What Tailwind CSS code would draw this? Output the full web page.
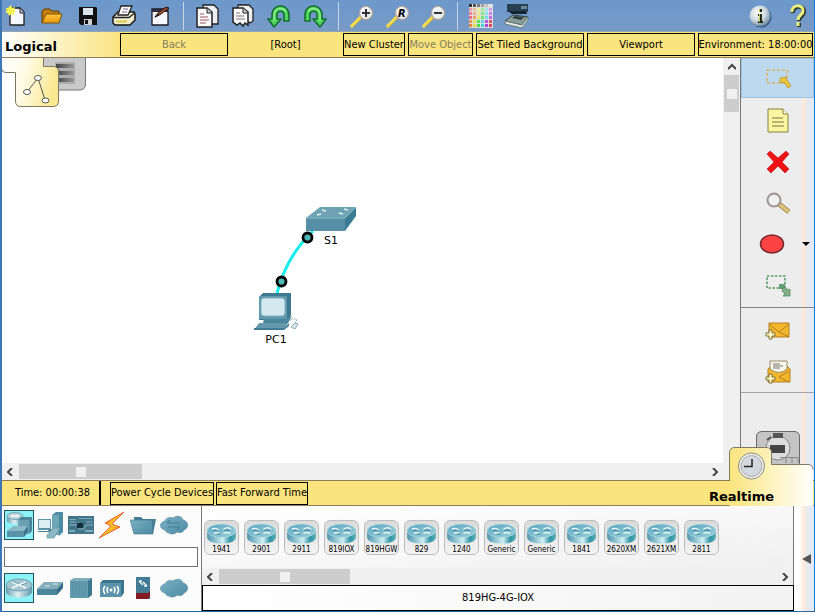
<!DOCTYPE html>
<html lang="en">
<head>
<meta charset="utf-8">
<meta name="viewport" content="width=device-width, initial-scale=1">
<title>Network Simulator - Logical Workspace</title>
<script src="https://cdn.jsdelivr.net/npm/@tailwindcss/browser@4"></script>
</head>
<body class="h-screen min-h-[560px] flex flex-col overflow-hidden bg-white border-l-2 border-l-[#3d76b4] border-r border-r-[#1c78d2] border-b border-b-[#2867a3] font-['DejaVu_Sans_Condensed','DejaVu_Sans',sans-serif] text-[11px] leading-4 text-black">

<!-- shared gradients and symbols -->
<svg class="absolute w-0 h-0" aria-hidden="true">
  <defs>
    <linearGradient id="teal" x1="0" x2="1" y1="0" y2="0"><stop offset="0" stop-color="#4f93ab"/><stop offset=".3" stop-color="#8fc6d3"/><stop offset=".55" stop-color="#d3f0f2"/><stop offset=".8" stop-color="#2f93a3"/><stop offset="1" stop-color="#5cb2b8"/></linearGradient>
    <linearGradient id="tealTop" x1="0" x2="1" y1="0" y2="1"><stop offset="0" stop-color="#5aa9c1"/><stop offset="1" stop-color="#9ccfdb"/></linearGradient>
    <linearGradient id="steel" x1="0" x2="1" y1="0" y2="1"><stop offset="0" stop-color="#7db0c4"/><stop offset="1" stop-color="#4a8aa3"/></linearGradient>
    <linearGradient id="metal" x1="0" x2="1"><stop offset="0" stop-color="#6a9fb2"/><stop offset=".45" stop-color="#e3f0f3"/><stop offset="1" stop-color="#5c97ab"/></linearGradient>
    <linearGradient id="gold" x1="0" x2="0" y1="0" y2="1"><stop offset="0" stop-color="#ffc93c"/><stop offset="1" stop-color="#e9960b"/></linearGradient>
    <linearGradient id="bolt" x1="0" x2="1" y1="0" y2="1"><stop offset="0" stop-color="#e8321c"/><stop offset=".5" stop-color="#ffc928"/><stop offset="1" stop-color="#f0561c"/></linearGradient>
    <radialGradient id="glass" cx=".4" cy=".35" r=".7"><stop offset="0" stop-color="#ffffff"/><stop offset=".55" stop-color="#c9d6dc"/><stop offset="1" stop-color="#5e7d9c"/></radialGradient>
    <symbol id="router" viewBox="0 0 32 23">
      <path d="M1 8v7c0 9 30 9 30 0V8z" fill="url(#teal)"/>
      <ellipse cx="16" cy="8" rx="15" ry="7" fill="url(#tealTop)" stroke="#b9dde5" stroke-width=".6"/>
      <path d="M6 6.500q4-2 7 1M26 6.500q-3-3-8 0M8 11q3-2 7 0M25 11q-4-2-7 0" stroke="#f2fbfc" stroke-width="1.400" fill="none"/>
      <path d="M7 8q4-2 6 1M19 8q3-2 6 0M12 12l3-1" stroke="#2c7088" stroke-width=".9" fill="none"/>
    </symbol>
    <symbol id="lens" viewBox="0 0 26 24">
      <path d="M3 22L12 13" stroke="#f0dc50" stroke-width="3.500" stroke-linecap="round"/>
      <path d="M4 23L13 14" stroke="#c4a634" stroke-width="1"/>
      <circle cx="17" cy="9" r="6.500" fill="#eef1f3" stroke="#b4a49a" stroke-width="1.300"/>
      <path d="M12 7a6 6 0 0 1 7-3" stroke="#fff" stroke-width="1.500" fill="none"/>
    </symbol>
    <symbol id="uturn" viewBox="0 0 24 24">
      <path d="M22 17h-5V11c0-5-7-5-7 0v4h4l-7 8-6-8h4v-4C5 -1 22 -1 22 11z" fill="#4fd35e" stroke="#156f31" stroke-width="1.600" stroke-linejoin="round"/>
      <path d="M7 17v-6c0-7 9-9 12-3" stroke="#92ee93" stroke-width="1.500" fill="none"/>
    </symbol>
    <symbol id="cloud" viewBox="0 0 28 20">
      <path d="M5 15c-6-1-6-8 0-9 1-4 6-4 8-3 4-3 9-2 10 2 6 1 6 8 1 10-1 3-5 3-7 2-3 3-7 2-8 1-2 0-3-1-4-3z" fill="url(#steel)" stroke="#5b94a8" stroke-width=".7"/>
    </symbol>
  </defs>
</svg>

<!-- main toolbar -->
<header class="h-8 shrink-0 flex items-center bg-linear-to-b from-[#6c98cb] to-[#789ac6] border-b border-[#91a5b5]">
  <nav class="flex items-center -ml-1" aria-label="Main toolbar">
    <button class="w-9 h-7 grid place-items-center" aria-label="New"><svg width="20" height="22" viewBox="0 0 20 22"><path d="M4 3h10l4 4v13H4z" fill="#f6f7ff" stroke="#222" stroke-width="1.300"/><path d="M14 3v5h4" fill="#bfc4d6" stroke="#222"/><path d="M5 0l1 3 3-1-1 3 3 1-3 1 0 3-3-1-2 2-1-3-3 0 2-3-2-2 3 0z" fill="#f3f44d"/></svg></button>
    <button class="w-9 h-7 grid place-items-center" aria-label="Open"><svg width="22" height="18" viewBox="0 0 22 18"><path d="M1 16V4l2-2h6l2 2h7v4" fill="#c37c10" stroke="#5c3b08"/><path d="M1 16L5 7h16l-3 9z" fill="url(#gold)" stroke="#80530a"/></svg></button>
    <button class="w-9 h-7 grid place-items-center" aria-label="Save"><svg width="20" height="20" viewBox="0 0 20 20"><path d="M1 1h17l1 1v17H3l-2-2z" fill="#111"/><path d="M5 2h10v7H5z" fill="#dbe3ea"/><path d="M6 13h8v6H6z" fill="#c9ced4"/><path d="M7 14h3v4H7z" fill="#111"/></svg></button>
    <button class="w-9 h-7 grid place-items-center" aria-label="Print"><svg width="24" height="22" viewBox="0 0 24 22"><path d="M1 12L6 7h16l1 2v6l-5 5H3l-2-2z" fill="#f1efcf" stroke="#161616" stroke-width="1.500"/><path d="M6 10L9 1h11l-4 9z" fill="#fff" stroke="#222" stroke-width="1.300"/><path d="M11 4h5M10 7h5" stroke="#735d91"/><path d="M2 12.500h15l5-4" fill="none" stroke="#222" stroke-width="1.300"/><path d="M4 16.500h11" stroke="#e0c648" stroke-width="2"/></svg></button>
    <button class="w-9 h-7 grid place-items-center" aria-label="Activity wizard"><svg width="20" height="20" viewBox="0 0 20 20"><path d="M2 3h16v16H2z" fill="#f7f8ff" stroke="#1b1b26" stroke-width="1.300"/><path d="M2 3h16v3H2z" fill="#29293b"/><path d="M5 11l3-4L16 1l3 1-8 6z" fill="#9e5137" stroke="#2e1512"/><path d="M4 12l4-4 2 1z" fill="#241a1a"/></svg></button>
    <span class="w-px h-7 mx-[5px] bg-[#c7d5e7]"></span>
    <button class="w-9 h-7 grid place-items-center" aria-label="Copy"><svg width="24" height="26" viewBox="0 0 24 26"><path d="M8 2h11l4 4v15H8z" fill="#eceef2" stroke="#222" stroke-width="1.300"/><path d="M2 5h10l5 4v15H2z" fill="#fafafa" stroke="#222" stroke-width="1.500"/><path d="M12 5v5h5" fill="#ccc" stroke="#222"/><path d="M5 11h4M5 14h8M5 17h9M5 20h6" stroke="#9b5966"/></svg></button>
    <button class="w-9 h-7 grid place-items-center" aria-label="Paste"><svg width="24" height="26" viewBox="0 0 24 26"><path d="M7 2h11l4 4v12l-3 2-3-2-9 1z" fill="#eceef2" stroke="#222" stroke-width="1.300"/><path d="M2 5h10l5 4v13l-3-2-2 3-3-3-3 2-4-3z" fill="#fafafa" stroke="#222" stroke-width="1.500"/><path d="M12 5v5h5" fill="#ccc" stroke="#222"/><path d="M5 10h4M5 13h8M5 16h9" stroke="#887079"/></svg></button>
    <button class="w-9 h-7 grid place-items-center" aria-label="Undo"><svg width="24" height="24"><use href="#uturn"/></svg></button>
    <button class="w-9 h-7 grid place-items-center" aria-label="Redo"><svg class="-scale-x-100" width="24" height="24"><use href="#uturn"/></svg></button>
    <span class="w-px h-7 mx-[5px] bg-[#c7d5e7]"></span>
    <button class="w-9 h-7 grid place-items-center" aria-label="Zoom in"><svg width="26" height="24"><use href="#lens"/><path d="M17 5v8M13 9h8" stroke="#333" stroke-width="2"/></svg></button>
    <button class="w-9 h-7 grid place-items-center" aria-label="Zoom reset"><svg width="26" height="24"><use href="#lens"/><text x="13" y="13" class="font-['DejaVu_Sans_Condensed'] font-bold italic text-[11px]">R</text></svg></button>
    <button class="w-9 h-7 grid place-items-center" aria-label="Zoom out"><svg width="26" height="24"><use href="#lens"/><path d="M13 9h8" stroke="#333" stroke-width="2"/></svg></button>
    <span class="w-px h-7 mx-[5px] bg-[#c7d5e7]"></span>
    <button class="w-9 h-7 grid place-items-center" aria-label="Drawing palette"><svg id="palette" width="24" height="24" viewBox="0 0 24 24"><path d="M0 0h24v24H0z" fill="#ddd"/></svg></button>
    <button class="w-9 h-7 grid place-items-center" aria-label="Custom devices"><svg width="26" height="26" viewBox="0 0 26 26"><path d="M3 1h21v8H3z" fill="#284052"/><path d="M17 3h6v3h-6z" fill="#6b899a"/><path d="M4 8h18l1 3H8z" fill="#142531"/><path d="M1 18l8-6 15 2-6 8z" fill="#8a9d98" stroke="#344"/><path d="M8 15l3-2 9 1-3 3z" fill="#30413f"/><path d="M1 18v3l17 4 6-8v-3l-6 8z" fill="#e4ebe5" stroke="#677"/></svg></button>
  </nav>
  <div class="ml-auto flex items-center">
    <button class="w-9 h-7 grid place-items-center" aria-label="Info"><svg width="24" height="24" viewBox="0 0 24 24"><circle cx="13" cy="13" r="10.500" fill="#345681"/><circle cx="12" cy="12" r="10.500" fill="url(#glass)"/><path d="M11 5h3v3h-3zM10 10h4v7h1v2h-5v-2h1v-5h-1z" fill="#242a13"/><path d="M11 5h1v3h-1zM11 10h1v8h-1z" fill="#c8ca58"/></svg></button>
    <button class="w-9 h-7 grid place-items-center pl-1" aria-label="Help"><svg width="20" height="24" viewBox="0 0 20 24"><path d="M5 9c-1-8 12-8 11-1 0 4-5 4-5 9M11 19v4" fill="none" stroke="#2e3a36" stroke-width="4"/><path d="M4 8c-1-8 12-8 11-1 0 4-5 4-5 9M10 18v4" fill="none" stroke="#eaf07c" stroke-width="3"/></svg></button>
  </div>
</header>

<!-- workspace bar -->
<div class="h-[26px] shrink-0 flex items-center pr-px bg-linear-to-r from-white to-[#f9e47e] to-[118px] border-b border-[#8d7d5c] whitespace-nowrap">
  <h1 class="w-[118px] shrink-0 pl-[3px] pt-1 font-['DejaVu_Sans'] font-bold text-[13px]">Logical</h1>
  <button class="w-[108px] h-[23px] shrink-0 border border-black text-[#86805f]" disabled>Back</button>
  <span class="flex-1 text-center">[Root]</span>
  <div class="flex gap-[3px]">
    <button class="w-[62px] h-[23px] flex items-center justify-center border border-black">New Cluster</button>
    <button class="w-[65px] h-[23px] flex items-center justify-center border border-black text-[#86805f]" disabled>Move Object</button>
    <button class="w-[108px] h-[23px] flex items-center justify-center border border-black">Set Tiled Background</button>
    <button class="w-[108px] h-[23px] flex items-center justify-center border border-black">Viewport</button>
    <button class="w-[115px] h-[23px] flex items-center justify-center border border-black">Environment: 18:00:00</button>
  </div>
</div>

<main class="relative flex-1 min-h-0 flex">
  <section class="flex-1 min-w-0 flex flex-col" aria-label="Workspace">
    <div class="relative flex-1 min-h-0 overflow-hidden bg-white">
      <!-- workspace tabs -->
      <svg class="absolute left-0 -top-px" width="90" height="52" viewBox="2 57 90 52">
        <defs><linearGradient id="tabL" x1="0" x2="1" y1="0" y2=".2"><stop offset="0" stop-color="#fff"/><stop offset=".45" stop-color="#fffbe6"/><stop offset="1" stop-color="#fae993"/></linearGradient>
        <linearGradient id="rack" x1="0" x2="1"><stop offset="0" stop-color="#444"/><stop offset="1" stop-color="#999"/></linearGradient></defs>
        <path d="M43 57.500h42.500V84q0 6-6 6H43z" fill="#c9c9c9" stroke="#777"/>
        <path d="M55 62h20v22H55z" fill="#adadad"/>
        <path d="M56 64h18v4H56zM56 71h18v4H56zM56 78h18v4H56z" fill="url(#rack)"/>
        <path d="M2 57h41v9.500h10q5.500 0 5.500 5.500V101q0 5.500-5.500 5.500H21q-5.500 0-5.500-5.500V72.500H6q-4 0-4-3z" fill="url(#tabL)"/>
        <path d="M43.500 58v8.500H53q5.500 0 5.500 5.500V101q0 5.500-5.500 5.500H21q-5.500 0-5.500-5.500V72.500H6q-4 0-4-3" fill="none" stroke="#7d7660"/>
        <path d="M27 92L38 78l7 22" fill="none" stroke="#555"/>
        <g fill="#fff" stroke="#555"><ellipse cx="38" cy="78" rx="3.500" ry="2.500"/><ellipse cx="27" cy="92" rx="3.500" ry="2.500"/><ellipse cx="45.500" cy="100.500" rx="3.500" ry="2.500"/></g>
      </svg>
      <!-- topology -->
      <svg class="absolute left-[240px] top-[132px]" width="130" height="160" viewBox="242 190 130 160" role="img" aria-label="Network topology">
        <path d="M277 293C283 270 295 248 313 231" fill="none" stroke="#18ecec" stroke-width="3"/>
        <path d="M306 218l14-11h36l-10 12z" fill="#6fa3b4"/>
        <path d="M306 218h39v13h-39z" fill="#568fa5"/>
        <path d="M345 218l11-11v9l-11 15z" fill="#3c7b94"/>
        <path d="M306 218h39l11-11" fill="none" stroke="#8bbac8"/>
        <path d="M317 215l4-1M322 210l4 1M339 213l4 1M344 209l4 1" stroke="#e3f2f5" stroke-width="1.500"/>
        <path d="M259 297l4-4h28v22l-3 5h-29z" fill="#3c7890"/>
        <path d="M259 296h28v23h-28z" fill="#5f98ad"/>
        <rect x="261" y="298" width="24" height="18" rx="3" fill="#d4e8ef" stroke="#82b0c0"/>
        <path d="M264 319h20l8-3-4 7h-25z" fill="#4a879e"/>
        <path d="M259 323h29l-5 7h-29z" fill="#6598ac"/>
        <path d="M254 328h30l5-5v3l-5 4h-30z" fill="#427c94"/>
        <path d="M289 321q5-4 8-1l-3 4" fill="none" stroke="#a9bcc4"/>
        <path d="M291 327l4-4 3 1-3 5z" fill="#d8e5e9" stroke="#769baa" stroke-width=".8"/>
        <g fill="#4fb9b9" stroke="#000" stroke-width="2.800"><circle cx="307.500" cy="237.500" r="4.500"/><circle cx="281.500" cy="281.500" r="4.500"/></g>
        <g class="font-['DejaVu_Sans'] text-[11px]" text-anchor="middle"><text x="331" y="244">S1</text><text x="276" y="343">PC1</text></g>
      </svg>
    </div>
    <div class="h-[17px] shrink-0 flex bg-[#f0f0f0]">
      <button class="w-[17px] grid place-items-center" aria-label="Scroll left"><svg width="8" height="8"><path d="M5 0L1 4l4 4" fill="none" stroke="#444" stroke-width="2"/></svg></button>
      <div class="w-[123px] my-px grid place-items-center bg-[#cdcdcd]"><span class="size-[10px] bg-[#f0f0f0]"></span></div>
      <button class="w-[17px] ml-auto grid place-items-center" aria-label="Scroll right"><svg width="8" height="8"><path d="M2 0l4 4-4 4" fill="none" stroke="#444" stroke-width="2"/></svg></button>
    </div>
  </section>
  <div class="w-[17px] shrink-0 flex flex-col bg-[#f0f0f0]">
    <button class="h-[17px] grid place-items-center" aria-label="Scroll up"><svg width="8" height="8"><path d="M0 6l4-4 4 4" fill="none" stroke="#444" stroke-width="2"/></svg></button>
    <div class="h-[37px] mx-px grid place-items-center bg-[#cdcdcd]"><span class="size-[10px] bg-[#f0f0f0]"></span></div>
  </div>

  <!-- tool palette -->
  <aside class="w-[74px] shrink-0 flex flex-col border-l border-[#777] bg-linear-to-r from-[#ededed] from-[60px] via-[#fde9d9] via-[63px] to-[#e3eaf3] to-[67px]" aria-label="Tools">
    <button class="h-10 shrink-0 mb-0.5 grid place-items-center border border-[#9fc4e2] bg-[#bcd9ef]" aria-label="Select"><svg width="28" height="24" viewBox="0 0 28 24"><path d="M3 4h20v13H3z" fill="none" stroke="#dbb56c" stroke-width="1.600" stroke-dasharray="3 2"/><path d="M16 12l6-1 1 3 4 6-3 2-4-6-4 1z" fill="#edc638" stroke="#b9a04b"/></svg></button>
    <button class="h-[41px] shrink-0 grid place-items-center" aria-label="Place note"><svg width="22" height="26" viewBox="0 0 22 26"><path d="M1 1h15l5 5v18H1z" fill="#faf5a0" stroke="#82803e"/><path d="M16 1v5h5" fill="#fffde2" stroke="#82803e"/><path d="M5 10h11M5 14h12M5 18h12" stroke="#78753e"/></svg></button>
    <button class="h-[41px] shrink-0 grid place-items-center" aria-label="Delete"><svg width="24" height="24" viewBox="0 0 24 24"><path d="M1 4l3-3 8 7 8-7 3 3-7 8 7 7-4 4-7-7-7 7-4-4 7-7z" fill="#f01114" stroke="#bd0b0e" stroke-width=".6"/></svg></button>
    <button class="h-[41px] shrink-0 grid place-items-center" aria-label="Inspect"><svg width="26" height="24" viewBox="0 0 26 24"><path d="M14 13l10 8" stroke="#a98f55" stroke-width="5"/><path d="M14 13l10 8" stroke="#dfc279" stroke-width="3"/><circle cx="9" cy="9" r="6.500" fill="#edf0f1" stroke="#9d948d" stroke-width="2"/></svg></button>
    <button class="relative h-[41px] shrink-0 grid place-items-center pr-3" aria-label="Draw ellipse"><svg width="26" height="22" viewBox="0 0 26 22"><ellipse cx="13" cy="11" rx="11.500" ry="9" fill="#fb4344" stroke="#78282e" stroke-width="1.500"/></svg><svg class="absolute right-1 top-[19px]" width="8" height="5"><path d="M0 0h8L4 4z"/></svg></button>
    <button class="h-[41px] shrink-0 grid place-items-center" aria-label="Resize shape"><svg width="26" height="24" viewBox="0 0 26 24"><path d="M2 3h18v12H2z" fill="none" stroke="#5b9a68" stroke-width="1.600" stroke-dasharray="2.500 1.500"/><path d="M14 11h6v5h-6z" fill="#5fa070"/><path d="M18 15l2-1 3 3 2-1v7h-7l2-2-3-3z" fill="#84ad8b" stroke="#5b8a65" stroke-width=".8"/></svg></button>
    <hr class="mt-0.5 mb-0.5 border-[#858585]">
    <button class="h-[41px] shrink-0 grid place-items-center" aria-label="Add simple PDU"><svg width="26" height="18" viewBox="0 0 26 18"><path d="M4 1h20v14H4z" fill="#f4b62b" stroke="#b28122"/><path d="M4 2l10 8L24 2M14 10l10 5" fill="none" stroke="#ad7f28"/><path d="M4 8h3v3h3v3H7v3H4v-3H1v-3h3z" fill="#fff8c3" stroke="#7d7136"/></svg></button>
    <button class="h-[41px] shrink-0 grid place-items-center" aria-label="Add complex PDU"><svg width="26" height="26" viewBox="0 0 26 26"><path d="M3 10l4-4h14l4 4v13H3z" fill="#f4b62b" stroke="#b28122"/><path d="M5 2h17v8q-8 7-17 0z" fill="#f8f8ec" stroke="#978b65"/><path d="M8 5h7M8 7h10M8 9h7" stroke="#777"/><path d="M24 12l-10 6 10 5" fill="none" stroke="#ad7f28"/><path d="M4 15h3v3h3v3H7v3H4v-3H1v-3h3z" fill="#fff8c3" stroke="#7d7136"/></svg></button>
    <hr class="border-[#a5a5a5]">
  </aside>

  <!-- simulation mode / realtime tabs -->
  <svg class="absolute right-0 -bottom-[26px] z-10" width="86" height="76" viewBox="728 430 86 76">
    <defs><linearGradient id="tabR" x1="0" x2="1"><stop offset="0" stop-color="#f9e47e"/><stop offset=".5" stop-color="#fdf3bd"/><stop offset="1" stop-color="#fff"/></linearGradient></defs>
    <path d="M756.500 465V437q0-5.500 5.500-5.500h32q5.500 0 5.500 5.500v28z" fill="#c4c4c4" stroke="#686868"/>
    <circle cx="778" cy="448" r="12" fill="#ddd" stroke="#868686"/>
    <path d="M774 434h8v3h-8zM767 440l4-3" fill="#555" stroke="#555" stroke-width="2"/>
    <path d="M770 445h15v8h-15z" fill="#444"/>
    <path d="M780 457.500h18v5M786 458v5M792 458v5" fill="none" stroke="#888"/>
    <path d="M729.500 506V453q0-5.500 5.500-5.500h31q5.500 0 5.500 5.500v11.500H808q5 0 5 5V506z" fill="url(#tabR)"/>
    <path d="M729.500 481V453q0-5.500 5.500-5.500h31q5.500 0 5.500 5.500v11.500H808q5 0 5 5" fill="none" stroke="#807a62"/>
    <circle cx="751.500" cy="466" r="13" fill="#f1f0ea" stroke="#8b8b82"/>
    <circle cx="751.500" cy="466" r="10.500" fill="#d3d7de" stroke="#aaa"/>
    <path d="M752 459v7.500h-8" fill="none" stroke="#222" stroke-width="1.500"/>
  </svg>
</main>

<!-- time bar -->
<div class="relative h-[26px] shrink-0 flex items-center bg-[#f9e47e] border-t border-b border-[#8d7d5c] whitespace-nowrap">
  <div class="w-[99px] h-full flex items-center justify-center border-r-2 border-black pl-1">Time: 00:00:38</div>
  <div class="flex gap-0.5 pl-[9px]">
    <button class="w-[104px] h-[23px] flex items-center justify-center border border-black">Power Cycle Devices</button>
    <button class="w-[92px] h-[23px] flex items-center justify-center border border-black">Fast Forward Time</button>
  </div>
  <h2 class="relative z-20 ml-auto mr-10 pt-2 font-['DejaVu_Sans'] font-bold text-[13px]">Realtime</h2>
</div>

<!-- device browser -->
<footer class="h-[105px] shrink-0 flex bg-[#fbfbfb]">
  <section class="w-[199px] shrink-0 flex flex-col justify-between pt-1 pb-2 pl-0.5 pr-[3px]" aria-label="Device categories">
    <div class="flex gap-px">
      <button class="size-[30px] grid place-items-center border border-[#24505f] bg-[#8df2f6]" aria-label="Network devices"><svg width="28" height="28" viewBox="0 0 28 28"><path d="M2 5v5c0 4 16 4 16 0V5z" fill="url(#metal)"/><ellipse cx="10" cy="5" rx="8" ry="3.500" fill="#b5d0d9" stroke="#5e95a9" stroke-width=".7"/><path d="M6 4l8 2M14 4L6 6" stroke="#fff"/><path d="M13 9l3-3h11v14l-3 3H13z" fill="#4c869c"/><path d="M13 9h11v14H13z" fill="#74a8b9"/><path d="M16 9v8M19 9v12M22 9v12" stroke="#558ea4"/><path d="M2 20l6-5h15l-4 5z" fill="#8bb6c4"/><path d="M2 20h17v6H2z" fill="#5a93a8"/><path d="M19 20l4-5v6l-4 5z" fill="#3d778f"/></svg></button>
      <button class="size-[30px] grid place-items-center" aria-label="End devices"><svg width="28" height="28" viewBox="0 0 28 28"><path d="M16 4l4-3h7v20l-4 4z" fill="#4d8ba3"/><path d="M16 4h7v20h-7z" fill="#6ea5b7"/><path d="M2 8h13v11H2z" fill="#5c95aa"/><path d="M3 9h11v8H3z" fill="#dceef3"/><path d="M1 21h13l2-3h-3l-1 2H3z" fill="#457f96"/><path d="M11 24l7-7h6l-6 10h-7z" fill="#8cb8c6" stroke="#5d94a8" stroke-width=".6"/></svg></button>
      <button class="size-[30px] grid place-items-center" aria-label="Components"><svg width="26" height="20" viewBox="0 0 26 20"><path d="M0 1h26v18H0z" fill="#41758a"/><path d="M1 4h7v1H1zM11 3h13v1H11zM1 15h6v2H1zM17 15h8v2h-8z" fill="#7dabb9"/><path d="M1 10h7l3-3M25 10h-7l-2 4h-6M2 7h6M18 7h6" fill="none" stroke="#8db6c4"/><path d="M9 8h6v5H9z" fill="#142f3c"/></svg></button>
      <button class="size-[30px] grid place-items-center" aria-label="Connections"><svg width="28" height="28" viewBox="0 0 28 28"><path d="M26 1L7 12l6 3L1 27l21-11-8-3z" fill="url(#bolt)" stroke="#df4923" stroke-width=".8"/></svg></button>
      <button class="size-[30px] grid place-items-center" aria-label="Miscellaneous"><svg width="26" height="20" viewBox="0 0 26 20"><path d="M4 2h7l2 2h13l-3 15H5z" fill="#447e95"/><path d="M0 5h22l1 14H4z" fill="url(#steel)" stroke="#41758b" stroke-width=".6"/></svg></button>
      <button class="size-[30px] grid place-items-center" aria-label="Multiuser connection"><svg width="28" height="20"><use href="#cloud"/><path d="M7 8h13M10 5l-3 3M20 12H8M17 15l3-3" fill="none" stroke="#4c879d" stroke-width="1.500"/></svg></button>
    </div>
    <input class="w-full h-5 px-1 border border-[#717171] bg-white" type="text" aria-label="Search devices">
    <div class="flex gap-px">
      <button class="size-[30px] grid place-items-center border border-[#24505f] bg-[#8df2f6]" aria-label="Routers"><svg width="28" height="22" viewBox="0 0 28 22"><path d="M1 8v7c0 7 26 7 26 0V8z" fill="url(#metal)"/><ellipse cx="14" cy="8" rx="13" ry="6" fill="#a3c5d0" stroke="#5e97ab" stroke-width=".8"/><path d="M7 5l14 6M21 5L7 11" stroke="#f3fafb" stroke-width="1.500"/><path d="M8 4.500l6 2.500M22 6l-6 2" stroke="#4b859b" stroke-width=".7"/></svg></button>
      <button class="size-[30px] grid place-items-center" aria-label="Switches"><svg width="28" height="16" viewBox="0 0 28 16"><path d="M1 9l7-7h19l-6 7z" fill="#82adbb"/><path d="M1 9h20v6H1z" fill="#4c869d"/><path d="M21 9l6-7v6l-6 7z" fill="#356e87"/><path d="M9 6h5M17 4h5" stroke="#dceaf0"/></svg></button>
      <button class="size-[30px] grid place-items-center" aria-label="Hubs"><svg width="24" height="22" viewBox="0 0 24 22"><path d="M1 4l4-3h18v17l-4 3H1z" fill="#3d778f"/><path d="M1 4h18v17H1z" fill="#659bae"/><path d="M1 4l4-3h18l-4 3z" fill="#7fadbc"/><path d="M4 5v15M7 5v15M10 5v15M13 5v15M16 5v15" stroke="#528aa0"/></svg></button>
      <button class="size-[30px] grid place-items-center" aria-label="Wireless devices"><svg width="26" height="20" viewBox="0 0 26 20"><path d="M1 5l3-3h21v13l-3 4H1z" fill="#3b758d"/><path d="M1 5h21v14H1z" fill="#5b94aa"/><circle cx="12" cy="12" r="1.500" fill="#fff"/><path d="M9 9q-2 3 0 6M15 9q2 3 0 6M6 8q-3 4 0 8M18 8q3 4 0 8" stroke="#fff" stroke-width="1.500" fill="none"/></svg></button>
      <button class="size-[30px] grid place-items-center" aria-label="Security"><svg width="16" height="24" viewBox="0 0 16 24"><path d="M1 1h14v22H1z" fill="#427c94"/><path d="M1 17h12v6H1zM13 17l2-2v6l-2 2z" fill="#841c25"/><path d="M4 5l4 4M8 6l4 4M4 5h3M12 10H9" stroke="#eaf4f6" stroke-width="1.500"/></svg></button>
      <button class="size-[30px] grid place-items-center" aria-label="WAN emulation"><svg width="28" height="20"><use href="#cloud"/></svg></button>
    </div>
  </section>
  <section class="flex-1 min-w-0 flex flex-col border-l border-[#777]" aria-label="Devices">
    <div id="devices" class="flex-1 flex items-center gap-[5px] pl-0.5 border-r border-[#777] overflow-hidden bg-linear-to-br from-white to-[#f0f0f0]"></div>
    <div class="h-[17px] shrink-0 flex border-r border-[#777] bg-[#f0f0f0]">
      <button class="w-[17px] grid place-items-center" aria-label="Scroll devices left"><svg width="8" height="8"><path d="M5 0L1 4l4 4" fill="none" stroke="#444" stroke-width="2"/></svg></button>
      <div class="w-[131px] my-px grid place-items-center bg-[#cdcdcd]"><span class="size-[10px] bg-[#f0f0f0]"></span></div>
      <button class="w-[17px] ml-auto grid place-items-center" aria-label="Scroll devices right"><svg width="8" height="8"><path d="M2 0l4 4-4 4" fill="none" stroke="#444" stroke-width="2"/></svg></button>
    </div>
    <div class="h-[26px] shrink-0 flex items-center justify-center border border-black bg-linear-to-r from-white to-[#f3f3f3]">819HG-4G-IOX</div>
  </section>
  <button class="w-5 shrink-0 grid place-items-center justify-items-end pr-[3px] bg-linear-to-r from-white from-[5px] via-[#fde9d9] via-[10px] to-[#e3eaf3] to-[14px]" aria-label="Collapse panel"><svg width="9" height="10"><path d="M9 0v10L0 5z" fill="#555"/></svg></button>
</footer>

<template id="device">
  <button class="w-[35px] h-[35px] shrink-0 flex flex-col items-center justify-between border border-[#bdbdbd] rounded-md bg-linear-to-b from-[#dadada] to-[#f4f4f4] pt-0.5 whitespace-nowrap">
    <svg width="31" height="22"><use href="#router"/></svg>
    <span class="font-['DejaVu_Sans_Condensed','DejaVu_Sans'] text-[8px] leading-[9px]"></span>
  </button>
</template>
<script>
const list = document.getElementById('devices');
const tpl = document.getElementById('device');
for (const name of ['1941','2901','2911','819IOX','819HGW','829','1240','Generic','Generic','1841','2620XM','2621XM','2811']) {
  const node = tpl.content.cloneNode(true);
  node.querySelector('span').textContent = name;
  list.append(node);
}
// colour swatches of the palette icon: hue by column, lightness by row
const pal = document.getElementById('palette');
const hues = [350, 25, 60, 120, 185, 280];
for (let r = 0; r < 6; r++) for (let c = 0; c < 6; c++) {
  const s = document.createElementNS('http://www.w3.org/2000/svg', 'rect');
  s.setAttribute('x', c * 4); s.setAttribute('y', r * 4);
  s.setAttribute('width', 3); s.setAttribute('height', 3);
  s.setAttribute('fill', r === 0 ? `hsl(0 0% ${20 + c * 14}%)` : `hsl(${hues[(c + (r > 3 ? 1 : 0)) % 6]} 70% ${82 - r * 5}%)`);
  pal.append(s);
}
</script>
</body>
</html>
